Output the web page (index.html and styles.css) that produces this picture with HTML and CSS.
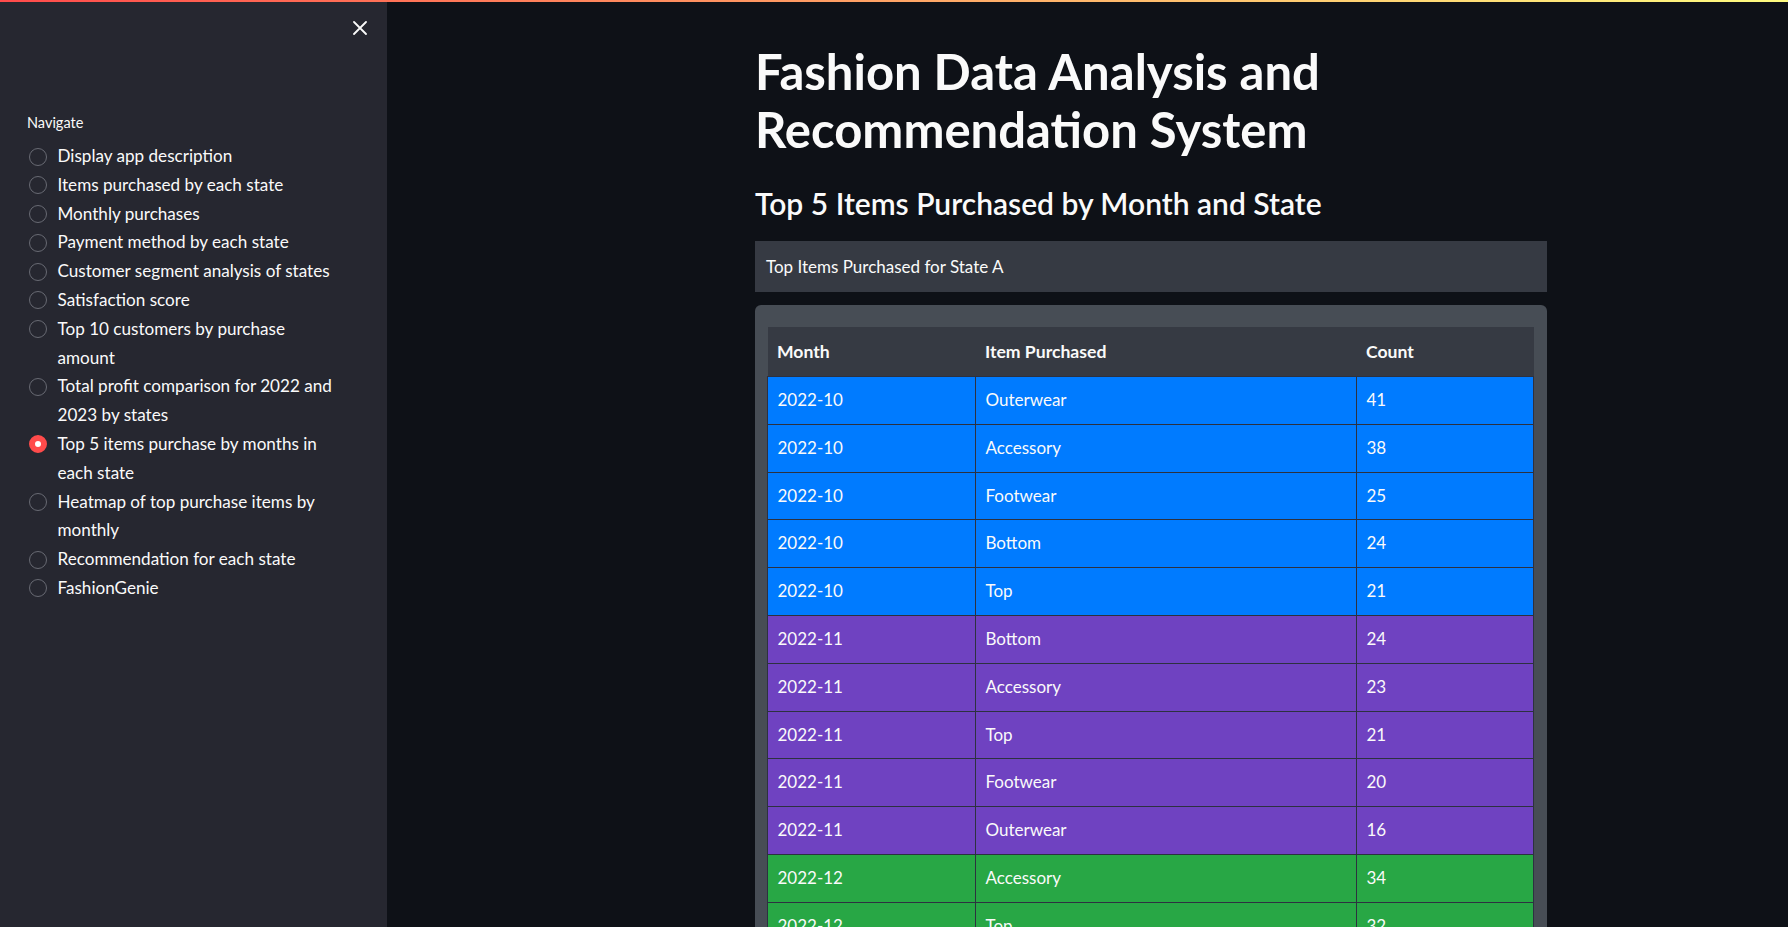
FILE: index.html
```html
<!DOCTYPE html>
<html lang="en">
<head>
<meta charset="utf-8">
<title>Fashion Data Analysis and Recommendation System</title>
<link rel="stylesheet" href="styles.css">
</head>
<body>
<div class="app">
  <div class="decoration"></div>
  <aside class="sidebar">
    <div class="sidebar-top">
      <button class="close-btn" aria-label="Close sidebar">
        <svg width="14" height="14" viewBox="0 0 14 14"><path d="M1 1 L13 13 M13 1 L1 13" stroke="#fafafa" stroke-width="1.8" stroke-linecap="round"/></svg>
      </button>
    </div>
    <div class="nav-label">Navigate</div>
    <ul class="radio-list">
      <li class="radio-item"><span class="radio-dot"></span><span class="radio-text">Display app description</span></li>
      <li class="radio-item"><span class="radio-dot"></span><span class="radio-text">Items purchased by each state</span></li>
      <li class="radio-item"><span class="radio-dot"></span><span class="radio-text">Monthly purchases</span></li>
      <li class="radio-item"><span class="radio-dot"></span><span class="radio-text">Payment method by each state</span></li>
      <li class="radio-item"><span class="radio-dot"></span><span class="radio-text">Customer segment analysis of states</span></li>
      <li class="radio-item"><span class="radio-dot"></span><span class="radio-text">Satisfaction score</span></li>
      <li class="radio-item"><span class="radio-dot"></span><span class="radio-text">Top 10 customers by purchase amount</span></li>
      <li class="radio-item"><span class="radio-dot"></span><span class="radio-text">Total profit comparison for 2022 and 2023 by states</span></li>
      <li class="radio-item selected"><span class="radio-dot"></span><span class="radio-text">Top 5 items purchase by months in each state</span></li>
      <li class="radio-item"><span class="radio-dot"></span><span class="radio-text">Heatmap of top purchase items by monthly</span></li>
      <li class="radio-item"><span class="radio-dot"></span><span class="radio-text">Recommendation for each state</span></li>
      <li class="radio-item"><span class="radio-dot"></span><span class="radio-text">FashionGenie</span></li>
    </ul>
  </aside>
  <main class="main">
    <div class="block">
      <h1 class="title">Fashion Data Analysis and Recommendation System</h1>
      <h3 class="subheader">Top 5 Items Purchased by Month and State</h3>
      <div class="state-box">Top Items Purchased for State A</div>
      <div class="table-card">
        <table class="data-table">
          <colgroup><col class="c-month"><col class="c-item"><col class="c-count"></colgroup>
          <thead>
            <tr><th>Month</th><th>Item Purchased</th><th>Count</th></tr>
          </thead>
          <tbody>
            <tr class="m-oct"><td>2022-10</td><td>Outerwear</td><td>41</td></tr>
            <tr class="m-oct"><td>2022-10</td><td>Accessory</td><td>38</td></tr>
            <tr class="m-oct"><td>2022-10</td><td>Footwear</td><td>25</td></tr>
            <tr class="m-oct"><td>2022-10</td><td>Bottom</td><td>24</td></tr>
            <tr class="m-oct"><td>2022-10</td><td>Top</td><td>21</td></tr>
            <tr class="m-nov"><td>2022-11</td><td>Bottom</td><td>24</td></tr>
            <tr class="m-nov"><td>2022-11</td><td>Accessory</td><td>23</td></tr>
            <tr class="m-nov"><td>2022-11</td><td>Top</td><td>21</td></tr>
            <tr class="m-nov"><td>2022-11</td><td>Footwear</td><td>20</td></tr>
            <tr class="m-nov"><td>2022-11</td><td>Outerwear</td><td>16</td></tr>
            <tr class="m-dec"><td>2022-12</td><td>Accessory</td><td>34</td></tr>
            <tr class="m-dec"><td>2022-12</td><td>Top</td><td>32</td></tr>
            <tr class="m-dec"><td>2022-12</td><td>Footwear</td><td>27</td></tr>
            <tr class="m-dec"><td>2022-12</td><td>Bottom</td><td>22</td></tr>
          </tbody>
        </table>
      </div>
    </div>
  </main>
</div>
</body>
</html>
```
FILE: styles.css
```css
html, body {
  margin: 0;
  height: 100%;
  overflow: hidden;
  background: #0e1117;
}

.app {
  position: relative;
  display: flex;
  height: 100vh;
  font-family: Lato, "Liberation Sans", sans-serif;
  color: #fafafa;
}

.decoration {
  position: absolute;
  top: 0;
  left: 0;
  right: 0;
  height: 2px;
  background: linear-gradient(90deg, #ff4b4b, #fffd80);
  z-index: 5;
}

/* Sidebar */
.sidebar {
  width: 387px;
  flex: none;
  box-sizing: border-box;
  background: #262730;
  padding: 0 27px;
}

.sidebar-top {
  display: flex;
  justify-content: flex-end;
  padding-top: 16px;
  margin-right: -12px;
}

.close-btn {
  width: 24px;
  height: 24px;
  padding: 0;
  border: none;
  background: transparent;
  display: flex;
  align-items: center;
  justify-content: center;
}

.nav-label {
  margin-top: 72px;
  font-size: 14.5px;
  line-height: 22px;
  color: #fafafa;
}

.radio-list {
  list-style: none;
  margin: 8px 0 0;
  padding: 0;
}

.radio-item {
  display: flex;
  align-items: flex-start;
  gap: 11px;
  font-size: 17.1px;
  line-height: 28.8px;
}

.radio-dot {
  flex: none;
  box-sizing: border-box;
  width: 18px;
  height: 18px;
  margin-top: 5.5px;
  margin-left: 1.5px;
  border-radius: 50%;
  border: 1.2px solid #686a73;
}

.radio-item.selected .radio-dot {
  border: 6px solid #ff4b4b;
  background: #ffffff;
}

.radio-text {
  width: 282px;
}

/* Main */
.main {
  flex: 1;
  overflow: hidden;
}

.block {
  width: 792px;
  margin-left: 368px;
  padding-top: 42px;
}

.title {
  margin: 0;
  font-size: 49px;
  line-height: 58px;
  font-weight: 700;
}

.subheader {
  margin: 25px 0 0;
  font-size: 30px;
  line-height: 40px;
  font-weight: 600;
}

.state-box {
  margin-top: 18px;
  height: 51px;
  box-sizing: border-box;
  padding: 0 11px;
  display: flex;
  align-items: center;
  background: #363a43;
  font-size: 17px;
}

.table-card {
  margin-top: 13px;
  background: #474d55;
  border-radius: 6px 6px 0 0;
  padding: 22px 14px 0 12px;
}

.data-table {
  width: 100%;
  border-collapse: collapse;
  table-layout: fixed;
  font-size: 17px;
}

.c-month { width: 208px; }
.c-item { width: 381px; }
.c-count { width: 177px; }

.data-table th {
  height: 49px;
  padding: 0 9.5px;
  text-align: left;
  font-weight: 700;
  font-size: 17.6px;
  background: #363a43;
}

.data-table td {
  padding: 9px 9.5px;
  line-height: 28.8px;
  border: 1px solid #2d3140;
}

.m-oct td { background: #007bff; }
.m-nov td { background: #6f42c1; }
.m-dec td { background: #28a745; }
```
